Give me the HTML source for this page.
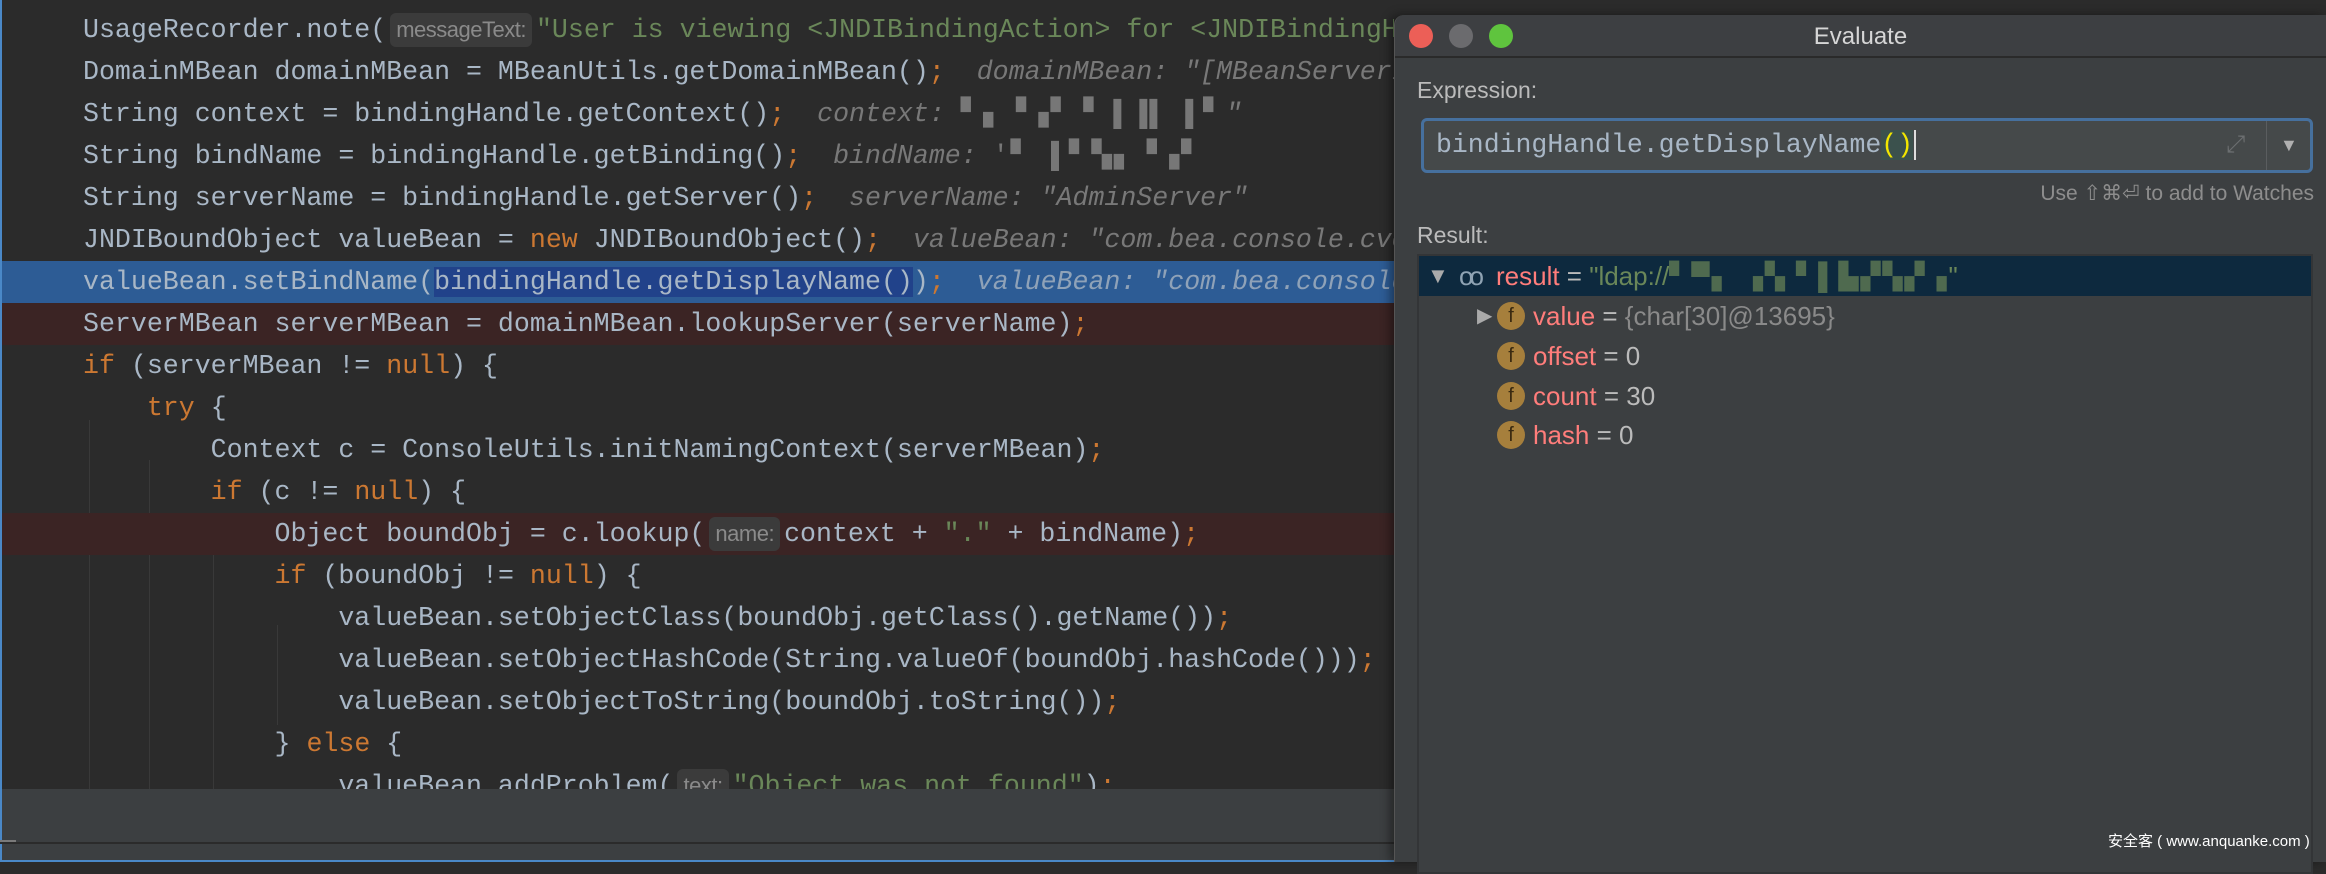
<!DOCTYPE html>
<html><head><meta charset="utf-8"><style>
*{margin:0;padding:0;box-sizing:border-box}
body{width:2326px;height:862px;background:#2b2b2b;position:relative;overflow:hidden;font-family:"Liberation Sans",sans-serif}
#ed{position:absolute;left:0;top:0;width:1394px;height:789px;background:#2b2b2b;overflow:hidden;border-left:2px solid #4a88c7}
.ln{position:absolute;left:0;width:1400px;height:42px;line-height:42px;white-space:pre;font-family:"Liberation Mono",monospace;font-size:26.6px;color:#a9b7c6;padding-left:81px}
.k{color:#cc7832}.s{color:#6a8759}.h{color:#787878;font-style:italic}
.p{display:inline-block;background:#3b3b3b;color:#8a8a8a;font-family:"Liberation Sans",sans-serif;font-size:22px;line-height:34px;height:34px;border-radius:6px;padding:0 6px;vertical-align:middle;margin:0 4px;letter-spacing:-0.5px}
.bl{color:#777;letter-spacing:2px}
.g{position:absolute;width:1px;background:#393939}
#dlg{position:absolute;left:1394px;top:15px;width:932px;height:847px;background:#3c3f41;border-radius:10px 0 0 0;border-left:1px solid #555;box-shadow:-4px 0 10px rgba(0,0,0,.4)}
#tb{position:absolute;left:0;top:0;width:100%;height:43px;background:#3d3f42;border-bottom:2px solid #2a2a2a;border-radius:10px 0 0 0}
.dot{position:absolute;top:9px;width:24px;height:24px;border-radius:50%}
.lbl{position:absolute;color:#bbbbbb;font-size:23px}
.row{position:absolute;left:0;width:100%;height:40px;line-height:40px;font-size:26px;color:#bbb;white-space:nowrap}
.f{position:absolute;width:28px;height:28px;border-radius:50%;background:#a67f3c;color:#3a2a10;font-size:20px;line-height:28px;text-align:center;top:6px}
.r{color:#ff7d7b}
</style></head><body>
<div id="ed">
<div class="g" style="left:87px;top:420px;height:369px"></div>
<div class="g" style="left:147px;top:460px;height:329px"></div>
<div class="g" style="left:211px;top:540px;height:249px"></div>
<div class="g" style="left:275px;top:625px;height:100px"></div>
<div class="ln" style="top:9px">UsageRecorder.note(<span class="p">messageText:</span><span class="s">"User is viewing &lt;JNDIBindingAction&gt; for &lt;JNDIBindingHandle&gt;"</span></div>
<div class="ln" style="top:51px">DomainMBean domainMBean = MBeanUtils.getDomainMBean()<span class="k">;</span>  <span class="h">domainMBean: "[MBeanServerInvocationHandler]"</span></div>
<div class="ln" style="top:93px">String context = bindingHandle.getContext()<span class="k">;</span>  <span class="h">context: </span><span class="bl">▘▖▝▗▘▝ ▌▐▌ ▌▘</span><span class="h">"</span></div>
<div class="ln" style="top:135px">String bindName = bindingHandle.getBinding()<span class="k">;</span>  <span class="h">bindName: </span><span class="bl">'▘ ▌▘▚▖▝▗▘</span></div>
<div class="ln" style="top:177px">String serverName = bindingHandle.getServer()<span class="k">;</span>  <span class="h">serverName: "AdminServer"</span></div>
<div class="ln" style="top:219px">JNDIBoundObject valueBean = <span class="k">new</span> JNDIBoundObject()<span class="k">;</span>  <span class="h">valueBean: "com.bea.console.cvo.JNDIBoundObject"</span></div>
<div class="ln" style="top:261px;background:#2d5c95">valueBean.setBindName(<span style="background:#21428a">bindingHandle.getDisplayName()</span>)<span class="k">;</span>  <span class="h" style="color:#8fa2b8">valueBean: "com.bea.console.cvo"</span></div>
<div class="ln" style="top:303px;background:#3b2424">ServerMBean serverMBean = domainMBean.lookupServer(serverName)<span class="k">;</span></div>
<div class="ln" style="top:345px"><span class="k">if</span> (serverMBean != <span class="k">null</span>) {</div>
<div class="ln" style="top:387px">    <span class="k">try</span> {</div>
<div class="ln" style="top:429px">        Context c = ConsoleUtils.initNamingContext(serverMBean)<span class="k">;</span></div>
<div class="ln" style="top:471px">        <span class="k">if</span> (c != <span class="k">null</span>) {</div>
<div class="ln" style="top:513px;background:#3b2424">            Object boundObj = c.lookup(<span class="p">name:</span>context + <span class="s">"."</span> + bindName)<span class="k">;</span></div>
<div class="ln" style="top:555px">            <span class="k">if</span> (boundObj != <span class="k">null</span>) {</div>
<div class="ln" style="top:597px">                valueBean.setObjectClass(boundObj.getClass().getName())<span class="k">;</span></div>
<div class="ln" style="top:639px">                valueBean.setObjectHashCode(String.valueOf(boundObj.hashCode()))<span class="k">;</span></div>
<div class="ln" style="top:681px">                valueBean.setObjectToString(boundObj.toString())<span class="k">;</span></div>
<div class="ln" style="top:723px">            } <span class="k">else</span> {</div>
<div class="ln" style="top:765px">                valueBean.addProblem(<span class="p">text:</span><span class="s">"Object was not found"</span>)<span class="k">;</span></div>
</div>
<div style="position:absolute;left:0;top:789px;width:1394px;height:53px;background:#3c3f41;border-left:2px solid #4a88c7"></div>
<div style="position:absolute;left:0;top:840px;width:16px;height:7px;background:#7a7a7a"></div>
<div style="position:absolute;left:0;top:842px;width:1394px;height:2px;background:#2b2b2b"></div>
<div style="position:absolute;left:0;top:844px;width:1394px;height:16px;background:#3c3f41;border-left:2px solid #4a88c7"></div>
<div style="position:absolute;left:0;top:860px;width:2326px;height:2px;background:#4a88c7"></div>

<div id="dlg">
<div id="tb">
<div class="dot" style="left:14px;background:#ec5f57"></div>
<div class="dot" style="left:54px;background:#6b6b6e"></div>
<div class="dot" style="left:94px;background:#5fc43e"></div>
<div style="position:absolute;left:0;width:100%;text-align:center;top:0;line-height:43px;color:#d6d6d6;font-size:24px">Evaluate</div>
</div>
<div class="lbl" style="left:22px;top:62px">Expression:</div>
<div style="position:absolute;left:26px;top:103px;width:892px;height:55px;border:3px solid #46709e;border-radius:6px;background:#45494a">
<div style="position:absolute;left:12px;top:0;line-height:49px;font-family:'Liberation Mono',monospace;font-size:26.5px;color:#a9b7c6;white-space:pre">bindingHandle.getDisplayName<span style="color:#f2e600;background:#3b514d">()</span><span style="border-left:2px solid #ddd;margin-left:1px"></span></div>
<div style="position:absolute;left:802px;top:10px;color:#6b6e70;font-size:24px">⤢</div>
<div style="position:absolute;left:842px;top:0;width:1px;height:49px;background:#5a5d5f"></div>
<div style="position:absolute;left:856px;top:0;line-height:49px;color:#b0b0b0;font-size:18px">▼</div>
</div>
<div style="position:absolute;right:12px;top:166px;color:#8d8d8d;font-size:21px">Use ⇧⌘⏎ to add to Watches</div>
<div class="lbl" style="left:22px;top:207px">Result:</div>
<div style="position:absolute;left:22px;top:239px;width:896px;height:620px;border:2px solid #333537;background:#3c3f41">
<div class="row" style="top:0;background:#0d293e"><span style="position:absolute;left:8px;color:#aaa;font-size:22px">▼</span><span style="position:absolute;left:40px;color:#8fa3b3;font-size:26px;letter-spacing:-4px">oo</span><span style="position:absolute;left:77px"><span class="r">result</span> = <span style="color:#6a8759">"ldap://</span><span class="bl" style="color:#4f6a4f">▘▀▖ ▗▚ ▘▌▙▞▚▞▗</span><span style="color:#6a8759">"</span></span></div>
<div class="row" style="top:40px"><span style="position:absolute;left:58px;color:#aaa;font-size:20px">▶</span><span class="f" style="left:78px">f</span><span style="position:absolute;left:114px"><span class="r">value</span> = <span style="color:#8a8a8a">{char[30]@13695}</span></span></div>
<div class="row" style="top:80px"><span class="f" style="left:78px">f</span><span style="position:absolute;left:114px"><span class="r">offset</span> = 0</span></div>
<div class="row" style="top:120px"><span class="f" style="left:78px">f</span><span style="position:absolute;left:114px"><span class="r">count</span> = 30</span></div>
<div class="row" style="top:159px"><span class="f" style="left:78px">f</span><span style="position:absolute;left:114px"><span class="r">hash</span> = 0</span></div>
</div>
</div>
<div style="position:absolute;left:2108px;top:830px;color:#fff;font-size:15px;font-family:'Liberation Sans','Noto Sans CJK SC',sans-serif">安全客 ( www.anquanke.com )</div>
</body></html>
